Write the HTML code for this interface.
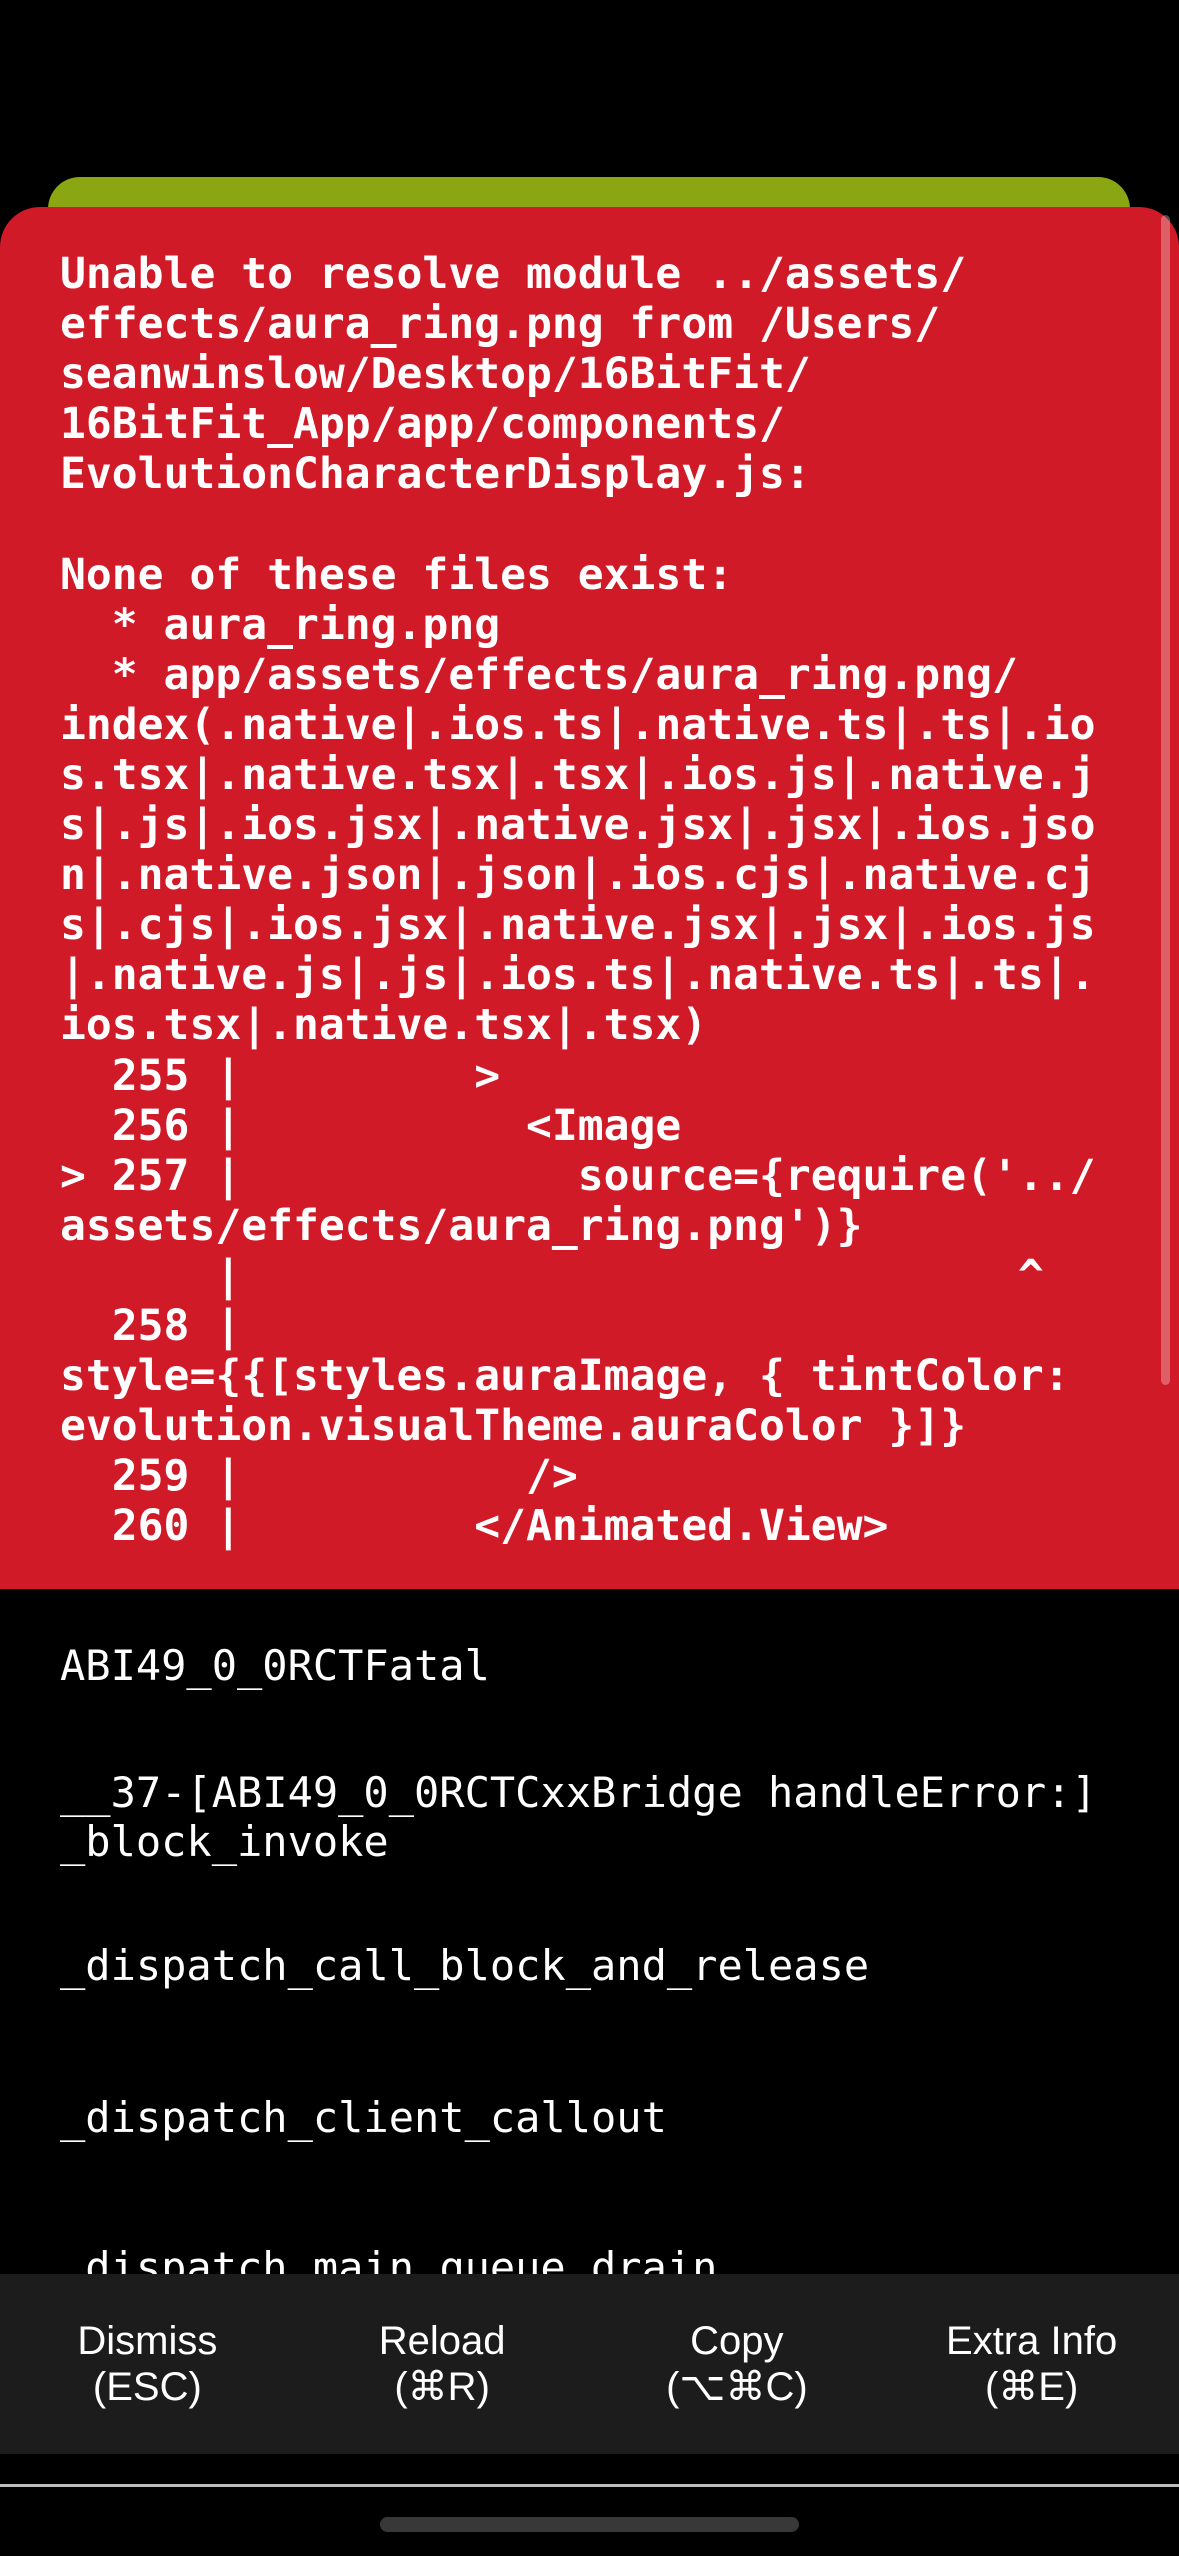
<!DOCTYPE html>
<html><head><meta charset="utf-8"><style>
html,body{margin:0;padding:0;background:#000;}
body{width:1179px;height:2556px;position:relative;overflow:hidden;}
.green{position:absolute;left:48px;top:177px;width:1082px;height:80px;background:#8aa612;border-radius:32px 32px 0 0;}
.red{position:absolute;left:0;top:207px;width:1179px;height:1382px;background:#d01a28;border-radius:40px 40px 0 0;}
.scroll{position:absolute;left:1161px;top:215px;width:9px;height:1170px;background:rgba(255,255,255,0.3);border-radius:5px;}
.msg{position:absolute;left:60px;top:249px;margin:0;font-family:"DejaVu Sans Mono","Liberation Mono",monospace;font-weight:bold;font-size:43px;line-height:50.1px;color:#fff;white-space:pre;}
.st{position:absolute;left:60px;margin:0;font-family:"DejaVu Sans Mono","Liberation Mono",monospace;font-size:42px;line-height:49px;color:#fff;white-space:pre;}
.bar{position:absolute;left:0;top:2274px;width:1179px;height:180px;background:#1c1c1c;display:flex;}
.bar div{flex:1;text-align:center;color:#fff;font-family:"Liberation Sans",sans-serif;font-size:40px;line-height:46px;padding-top:44px;}
.line{position:absolute;left:0;top:2484px;width:1179px;height:3px;background:#bdbdbd;}
.home{position:absolute;left:380px;top:2517px;width:419px;height:15px;border-radius:8px;background:#383838;}
</style></head><body>
<div class="green"></div>
<div class="red"></div>
<div class="scroll"></div>
<pre class="msg">Unable to resolve module ../assets/
effects/aura_ring.png from /Users/
seanwinslow/Desktop/16BitFit/
16BitFit_App/app/components/
EvolutionCharacterDisplay.js:

None of these files exist:
  * aura_ring.png
  * app/assets/effects/aura_ring.png/
index(.native|.ios.ts|.native.ts|.ts|.io
s.tsx|.native.tsx|.tsx|.ios.js|.native.j
s|.js|.ios.jsx|.native.jsx|.jsx|.ios.jso
n|.native.json|.json|.ios.cjs|.native.cj
s|.cjs|.ios.jsx|.native.jsx|.jsx|.ios.js
|.native.js|.js|.ios.ts|.native.ts|.ts|.
ios.tsx|.native.tsx|.tsx)
  255 |         &gt;
  256 |           &lt;Image
&gt; 257 |             source={require('../
assets/effects/aura_ring.png')}
      |                              ^
  258 |
style={{[styles.auraImage, { tintColor:
evolution.visualTheme.auraColor }]}
  259 |           /&gt;
  260 |         &lt;/Animated.View&gt;</pre>
<pre class="st" style="top:1641px">ABI49_0_0RCTFatal</pre>
<pre class="st" style="top:1768px">__37-[ABI49_0_0RCTCxxBridge handleError:]
_block_invoke</pre>
<pre class="st" style="top:1941px">_dispatch_call_block_and_release</pre>
<pre class="st" style="top:2093px">_dispatch_client_callout</pre>
<pre class="st" style="top:2243px">_dispatch_main_queue_drain</pre>
<div class="bar">
<div>Dismiss<br>(ESC)</div>
<div>Reload<br>(⌘R)</div>
<div>Copy<br>(⌥⌘C)</div>
<div>Extra Info<br>(⌘E)</div>
</div>
<div class="line"></div>
<div class="home"></div>
</body></html>
